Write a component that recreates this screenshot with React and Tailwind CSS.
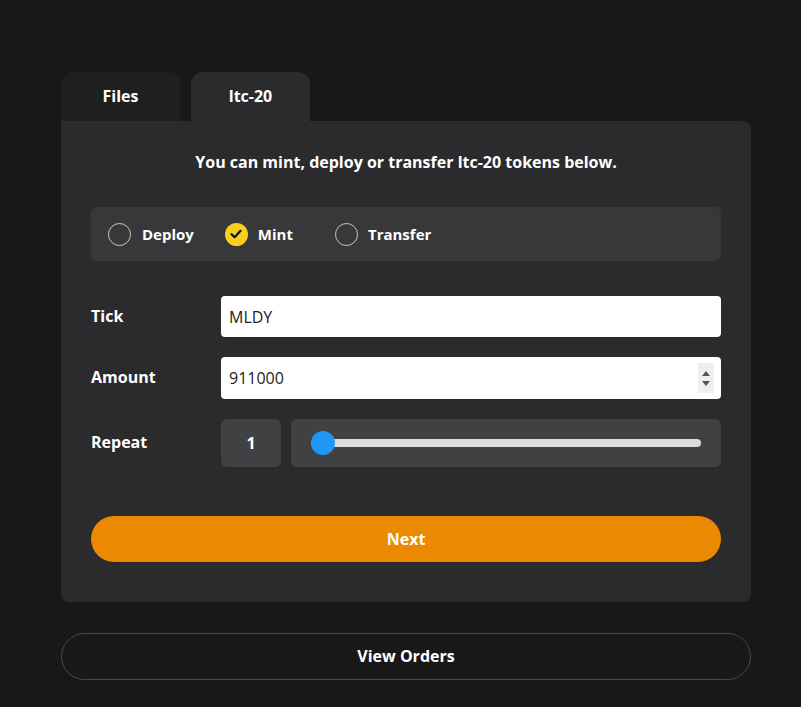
import React from "react";

function Radio({ checked }) {
  if (checked) {
    return (
      <span className="flex h-[23px] w-[23px] items-center justify-center rounded-full bg-[#f7cf1d]">
        <svg width="14" height="14" viewBox="0 0 14 14" fill="none">
          <path d="M2.5 7.2 L5.6 10.2 L11.6 3.8" stroke="#111" strokeWidth="2.2" strokeLinecap="round" strokeLinejoin="round" />
        </svg>
      </span>
    );
  }
  return <span className="block h-[23px] w-[23px] rounded-full border-[1.5px] border-[#c8c8c8]" />;
}

export default function App() {
  return (
    <div className="min-h-[707px] w-full bg-[#181818] font-['Open_Sans',sans-serif] text-white">
      <div className="ml-[61px] w-[690px] pt-[72px]">
        <div className="flex gap-[11px]">
          <div className="flex h-[49px] w-[119px] items-center justify-center rounded-t-[12px] bg-[#1f1f1f] pb-[1px] text-[16px] font-bold">
            Files
          </div>
          <div className="flex h-[49px] w-[119px] items-center justify-center rounded-t-[12px] bg-[#2b2b2d] pb-[1px] text-[16px] font-bold">
            ltc-20
          </div>
        </div>
        <div className="rounded-b-[8px] rounded-tr-[8px] bg-[#2b2b2d] px-[30px] pt-[29px] pb-[40px]">
          <p className="text-center text-[16px] font-bold leading-[24px]">
            You can mint, deploy or transfer ltc-20 tokens below.
          </p>
          <div className="mt-[33px] flex h-[54px] items-center rounded-[6px] bg-[#38383a] pl-[17px]">
            <div className="flex items-center gap-[11px]">
              <Radio />
              <span className="text-[15px] font-bold">Deploy</span>
            </div>
            <div className="ml-[31px] flex items-center gap-[10px]">
              <Radio checked />
              <span className="text-[15px] font-bold">Mint</span>
            </div>
            <div className="ml-[42px] flex items-center gap-[10px]">
              <Radio />
              <span className="text-[15px] font-bold">Transfer</span>
            </div>
          </div>

          <div className="mt-[35px] flex items-center">
            <span className="w-[130px] pb-[2px] text-[16px] font-bold">Tick</span>
            <div className="flex h-[41px] flex-1 items-center rounded-[4px] bg-white pl-[8px] text-[16px] text-[#222]">
              MLDY
            </div>
          </div>

          <div className="mt-[20px] flex items-center">
            <span className="w-[130px] pb-[2px] text-[16px] font-bold">Amount</span>
            <div className="flex h-[42px] flex-1 items-center rounded-[4px] bg-white pl-[8px] pr-[7px] text-[16px] text-[#222]">
              <span className="flex-1">911000</span>
              <div className="flex h-[30px] w-[16px] flex-col items-center justify-center gap-[5px] bg-[#efefef]">
                <svg width="8" height="5" viewBox="0 0 8 5"><path d="M0 5 L4 0 L8 5 Z" fill="#555" /></svg>
                <svg width="8" height="5" viewBox="0 0 8 5"><path d="M0 0 L4 5 L8 0 Z" fill="#555" /></svg>
              </div>
            </div>
          </div>

          <div className="mt-[20px] flex items-center">
            <span className="w-[130px] pb-[2px] text-[16px] font-bold">Repeat</span>
            <div className="flex h-[48px] w-[60px] items-center justify-center rounded-[6px] bg-[#414143] text-[16px] font-bold">
              1
            </div>
            <div className="ml-[10px] flex h-[48px] flex-1 items-center rounded-[6px] bg-[#414143] px-[20px]">
              <div className="relative h-[8px] flex-1 rounded-full bg-[#dcdcdc]">
                <span className="absolute left-0 top-1/2 h-[24px] w-[24px] -translate-y-1/2 rounded-full bg-[#2196f3]" />
              </div>
            </div>
          </div>

          <button className="mt-[49px] flex h-[46px] w-full items-center justify-center rounded-full bg-[#eb8a00] pb-[1px] text-[16px] font-bold text-white">
            Next
          </button>
        </div>

        <button className="mt-[31px] flex h-[47px] w-full items-center justify-center rounded-full border border-[#4a4a4a] bg-[#181818] pb-[1px] text-[16px] font-bold text-white">
          View Orders
        </button>
      </div>
    </div>
  );
}
